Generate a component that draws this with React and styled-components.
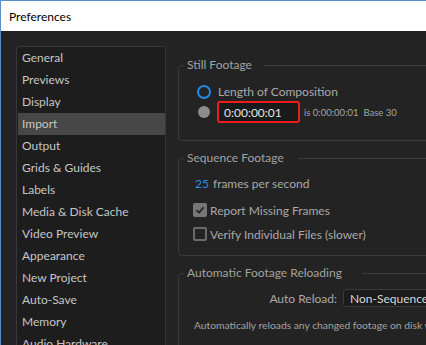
import React from "react";
import styled, { createGlobalStyle } from "styled-components";

const GlobalStyle = createGlobalStyle`
  html, body {
    margin: 0;
    padding: 0;
    background: #232323;
    overflow: hidden;
  }
  body {
    font-family: Lato, "Noto Sans", sans-serif;
  }
`;

//outer window with the windows accent border on the left and top
const Window = styled.div`
  display: flex;
  flex-direction: column;
  height: 100vh;
  box-sizing: border-box;
  border-left: 1px solid #5b8dcc;
  border-top: 1px solid #5b8dcc;
  background: #232323;
`;

const TitleBar = styled.div`
  height: 30px;
  flex: none;
  display: flex;
  align-items: center;
  padding-left: 8px;
  background: #ffffff;
  color: #000;
  font-size: 12px;
`;

const Body = styled.div`
  flex: 1;
  display: flex;
  align-items: flex-start;
  padding: 15px 0 0 15px;
  overflow: hidden;
`;

//left list of preference pages
const Sidebar = styled.ul`
  list-style: none;
  margin: 0;
  width: 150px;
  flex: none;
  box-sizing: border-box;
  padding: 0 0 0 1px;
  border: 1px solid #383838;
  border-radius: 3px;
  background: #1d1d1d;
`;

const SidebarItem = styled.li`
  height: 22px;
  line-height: 22px;
  padding-left: 4px;
  font-size: 12px;
  color: #c6c6c6;
  background: ${(p) => (p.$active ? "#474747" : "transparent")};
  white-space: nowrap;
`;

const Content = styled.div`
  flex: none;
  width: 300px;
  margin-left: 12px;
  padding-top: 11px;
  display: flex;
  flex-direction: column;
  gap: 9px;
`;

const Group = styled.fieldset`
  margin: 0;
  padding: 0;
  min-width: 0;
  border: 1px solid #3a3a3a;
  border-radius: 4px;
`;

const Legend = styled.legend`
  margin-left: 5px;
  padding: 0 0 0 3px;
  width: ${(p) => p.$width}px;
  box-sizing: border-box;
  font-size: 12px;
  line-height: 16px;
  color: #a2a2a2;
  white-space: nowrap;
`;

const GroupBody = styled.div`
  display: flex;
  flex-direction: column;
  padding: ${(p) => p.$pad};
`;

const Row = styled.div`
  display: flex;
  align-items: center;
  height: ${(p) => p.$h}px;
  margin-top: ${(p) => p.$mt || 0}px;
  padding-left: ${(p) => p.$indent || 0}px;
  font-size: 12px;
  color: #a9a9a9;
  white-space: nowrap;
`;

const RadioRing = styled.span`
  width: 14px;
  height: 14px;
  box-sizing: border-box;
  border: 2px solid #2189e6;
  border-radius: 50%;
  margin-right: 7px;
`;

const RadioDot = styled.span`
  width: 12px;
  height: 12px;
  margin: 0 7px 0 1px;
  border-radius: 50%;
  background: #8c8c8c;
`;

const TimecodeBox = styled.div`
  width: 83px;
  height: 22px;
  box-sizing: border-box;
  border: 2px solid #ec1c1c;
  border-radius: 3px;
  background: #1a1a1a;
  display: flex;
  align-items: center;
  padding-left: 5px;
  font-size: 12px;
  color: #e4e4e4;
`;

const SmallNote = styled.span`
  margin-left: 4px;
  font-size: 9.5px;
  color: #a5a5a5;
`;

const Blue = styled.span`
  color: #2d8ceb;
  margin-right: 4px;
`;

const CheckBox = styled.span`
  width: 14px;
  height: 14px;
  box-sizing: border-box;
  border-radius: 2px;
  margin-right: 3px;
  display: flex;
  align-items: center;
  justify-content: center;
  border: 2px solid ${(p) => (p.$checked ? "#777" : "#6a6a6a")};
  background: ${(p) => (p.$checked ? "#777" : "transparent")};
`;

const FieldLabel = styled.span`
  width: 158px;
  text-align: right;
  font-size: 12px;
  color: #a9a9a9;
`;

const Dropdown = styled.div`
  margin-left: 6px;
  width: 120px;
  height: 18px;
  box-sizing: border-box;
  border: 1px solid #3a3a3a;
  border-radius: 3px;
  background: #1b1b1b;
  display: flex;
  align-items: center;
  padding-left: 6px;
  font-size: 12px;
  color: #d6d6d6;
  white-space: nowrap;
  overflow: hidden;
`;

const Hint = styled.div`
  margin-top: 10px;
  padding-left: 15px;
  height: 16px;
  line-height: 16px;
  font-size: 10.3px;
  color: #a2a2a2;
  white-space: nowrap;
`;

const pages = [
  "General",
  "Previews",
  "Display",
  "Import",
  "Output",
  "Grids & Guides",
  "Labels",
  "Media & Disk Cache",
  "Video Preview",
  "Appearance",
  "New Project",
  "Auto-Save",
  "Memory",
  "Audio Hardware",
];

const Check = () => (
  <svg width="10" height="10" viewBox="0 0 10 10">
    <path d="M1.5 5.2 L4 7.6 L8.6 2.4" fill="none" stroke="#262626" strokeWidth="1.8" />
  </svg>
);

export default function App() {
  return (
    <>
      <GlobalStyle />
      <Window>
        <TitleBar>Preferences</TitleBar>
        <Body>
          <Sidebar>
            {pages.map((p) => (
              <SidebarItem key={p} $active={p === "Import"}>
                {p}
              </SidebarItem>
            ))}
          </Sidebar>

          <Content>
            <Group>
              <Legend $width={80}>Still Footage</Legend>
              <GroupBody $pad="9px 0 17px 18px">
                <Row $h={19}>
                  <RadioRing />
                  Length of Composition
                </Row>
                <Row $h={22}>
                  <RadioDot />
                  <TimecodeBox>0:00:00:01</TimecodeBox>
                  <SmallNote>is 0:00:00:01 &nbsp;Base 30</SmallNote>
                </Row>
              </GroupBody>
            </Group>

            <Group>
              <Legend $width={114}>Sequence Footage</Legend>
              <GroupBody $pad="9px 0 12px 14px">
                <Row $h={16} $indent={2}>
                  <Blue>25</Blue>frames per second
                </Row>
                <Row $h={18} $mt={10}>
                  <CheckBox $checked>
                    <Check />
                  </CheckBox>
                  Report Missing Frames
                </Row>
                <Row $h={18} $mt={6}>
                  <CheckBox />
                  Verify Individual Files (slower)
                </Row>
              </GroupBody>
            </Group>

            <Group>
              <Legend $width={178}>Automatic Footage Reloading</Legend>
              <GroupBody $pad="8px 0 20px 0">
                <Row $h={18}>
                  <FieldLabel>Auto Reload:</FieldLabel>
                  <Dropdown>Non-Sequence Footage</Dropdown>
                </Row>
                <Hint>Automatically reloads any changed footage on disk when After Effects regains focus.</Hint>
              </GroupBody>
            </Group>
          </Content>
        </Body>
      </Window>
    </>
  );
}
